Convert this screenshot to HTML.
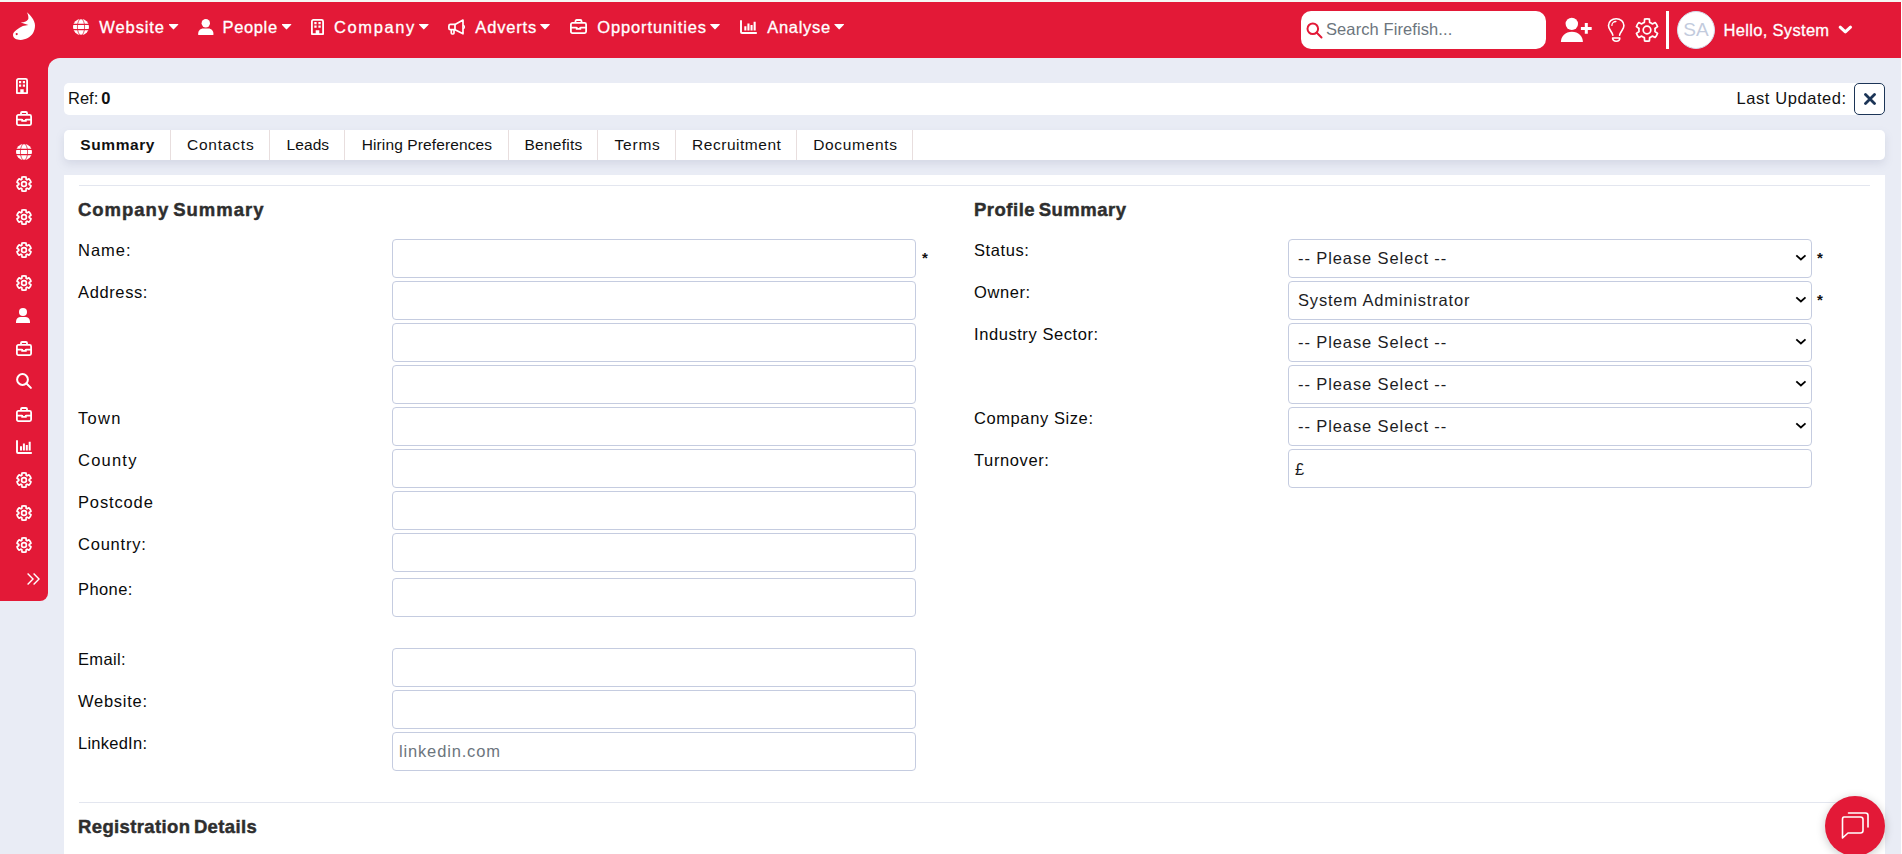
<!DOCTYPE html>
<html lang="en">
<head>
<meta charset="utf-8">
<title>Firefish - Company</title>
<style>
*{box-sizing:border-box}
html,body{margin:0;padding:0}
body{width:1902px;height:854px;overflow:hidden;background:#fff;font-family:"Liberation Sans",sans-serif;font-size:16.5px;color:#1d1d1f;position:relative}
#topstrip{position:absolute;left:0;top:0;width:1902px;height:2px;background:#f5f8f4}
#app{position:absolute;left:0;top:2px;width:1901px;height:852px;background:#e9ecf5;overflow:hidden}
header{position:absolute;left:0;top:0;width:1901px;height:56px;background:#e31937}
aside{position:absolute;left:0;top:56px;width:48px;height:543px;background:#e31937;border-bottom-right-radius:8px}
#corner{position:absolute;left:48px;top:56px;width:14px;height:14px;background:#e31937}
#corner:after{content:"";position:absolute;left:0;top:0;width:28px;height:28px;border-radius:12px;background:#e9ecf5}
header svg,aside svg{position:absolute;display:block;overflow:visible}
.nav{position:absolute;top:0;height:56px;color:#fff;font-size:16.5px;white-space:nowrap}
.nav span{position:absolute;top:15px;line-height:20px;font-weight:400;-webkit-text-stroke:.3px #fff}
.caret{position:absolute;top:21.5px;width:10px;height:6px;background:#fff;clip-path:path("M0.3 1.2C0 .6.4 0 1 0h8c.6 0 1 .6.700 1.200L5.600 5.600c-.3.400-.9.400-1.200 0z")}
#search{position:absolute;left:1301px;top:9px;width:245px;height:38px;background:#fff;border-radius:10px}
#search span{position:absolute;left:25px;top:8px;line-height:20px;color:#6c757d;white-space:nowrap}
#vdiv{position:absolute;left:1666px;top:9px;width:3px;height:38px;background:#fff}
#avatar{position:absolute;left:1677px;top:9px;width:38px;height:38px;border-radius:50%;background:#fff;border:1px solid #d5dbea;color:#c3cbdd;font-size:19px;line-height:35px;text-align:center;letter-spacing:.2px;padding-left:0}
#hello{position:absolute;left:1723.5px;top:17.5px;line-height:20px;color:#fff;white-space:nowrap;-webkit-text-stroke:.3px #fff}
/* content */
#refbar{position:absolute;left:64px;top:81px;width:1821px;height:32px;background:#fff;border-radius:5px}
#refbar .l{position:absolute;left:4px;top:5px;line-height:20px;white-space:nowrap;color:#111}
#refbar .r{position:absolute;left:1672.5px;top:5px;line-height:20px;white-space:nowrap;color:#111}
#closebtn{position:absolute;left:1854px;top:81px;width:31px;height:32px;border:1px solid #1c3557;border-radius:5px;background:#fff}
#tabs{position:absolute;left:64px;top:128px;width:1821px;height:30px;background:#fff;border-radius:5px;box-shadow:0 4px 8px rgba(120,130,160,.18)}
#tabs div{position:absolute;top:0;height:30px;border-right:1px solid #e8dede;font-size:15.5px;line-height:30px;white-space:nowrap;color:#111}
#tabs div span{position:absolute;top:0}
#card{position:absolute;left:64px;top:173px;width:1821px;height:700px;background:#fff}
.hr{position:absolute;left:15px;width:1791px;height:1px;background:#e3e6ef}
h2{position:absolute;margin:0;font-size:18.5px;line-height:22px;font-weight:700;color:#2e2e2e;white-space:nowrap;-webkit-text-stroke:.45px #2e2e2e;word-spacing:-2px}
label{position:absolute;line-height:20px;white-space:nowrap;color:#0a0a0a}
.inp{position:absolute;width:524px;height:39px;border:1px solid #c5cce0;border-radius:4px;background:#fff;margin:0;padding:0 6px;outline:none;font:inherit}
.inp span{position:absolute;left:6px;top:8px;line-height:20px;white-space:nowrap}
select{position:absolute;width:524px;height:39px;border:1px solid #c5cce0;border-radius:4px;background:#fff;font-family:"Liberation Sans",sans-serif;font-size:16.5px;color:#1d1d1f;padding:0 0 1px 9px;margin:0;outline:none;-webkit-appearance:none;appearance:none;letter-spacing:.9px}
.chev{position:absolute;display:block}
.req{position:absolute;font-size:15px;line-height:14px;color:#111;font-weight:700}
#chat{position:absolute;left:1825px;top:794px;width:60px;height:60px;border-radius:50%;background:#e31937;box-shadow:0 2px 10px rgba(0,0,0,.22)}




/*FIT*/#t_website{letter-spacing:0.90px}#t_people{letter-spacing:0.64px}#t_company{letter-spacing:1.61px}#t_adverts{letter-spacing:0.84px}#t_opps{letter-spacing:0.89px}#t_analyse{letter-spacing:0.68px}#t_search{letter-spacing:0.09px}#hello{letter-spacing:0.32px}#tab0{letter-spacing:0.59px}#tab1{letter-spacing:0.78px}#tab2{letter-spacing:0.09px}#tab3{letter-spacing:0.12px}#tab4{letter-spacing:0.25px}#tab5{letter-spacing:0.75px}#tab6{letter-spacing:0.52px}#tab7{letter-spacing:0.67px}#h_cs{letter-spacing:0.98px}#h_ps{letter-spacing:0.50px}#h_rd{letter-spacing:0.37px}#ll0{letter-spacing:1.00px}#ll1{letter-spacing:0.62px}#ll4{letter-spacing:1.32px}#ll5{letter-spacing:1.22px}#ll6{letter-spacing:0.86px}#ll7{letter-spacing:0.78px}#ll8{letter-spacing:0.40px}#ll9{letter-spacing:0.35px}#ll10{letter-spacing:0.73px}#ll11{letter-spacing:0.25px}#rl0{letter-spacing:0.59px}#rl1{letter-spacing:0.60px}#rl2{letter-spacing:0.57px}#rl4{letter-spacing:0.59px}#rl5{letter-spacing:0.62px}#ph_li{letter-spacing:0.84px}#t_last{letter-spacing:0.58px}/*ENDFIT*/
</style>
</head>
<body>
<div id="topstrip"></div>
<div id="app">
<header>
<!-- logo -->
<svg style="left:12px;top:10px" width="24" height="29" viewBox="0 0 24 29"><path fill="#fff" d="M14.800.3C17 1.800 18.600 3.600 19.700 5.200 21.800 8 23 10.800 23 13.600c0 2.900-.7 5.400-1.900 7.500C18.500 25.300 13.600 27.900 8.500 27.900 4.500 27.900 1.200 26.300 1 23c-.1-2 1.500-3.700 3.700-5.200 1.800-1.300 3.800-2.600 6.100-3.700 1.800-.7 3.700-1.100 5.600-1.200L8.700 10.600c1.800-.2 3.500-.6 4.900-1.200 1.900-.8 3-2 2.800-3.300-.1-1.300-.1-2.300-.45-3.300-.25-.8-.65-1.700-1.150-2.500z"/><circle cx="4.700" cy="22.100" r="1.100" fill="#e31937"/></svg>
<nav>
<div class="nav" style="left:73px"><svg style="left:0;top:17px" width="16" height="16" viewBox="0 0 16 16"><circle cx="8" cy="8" r="8" fill="#fff"/><g fill="none" stroke="#e31937"><ellipse cx="8" cy="8" rx="3.600" ry="8.300" stroke-width=".75"/><path stroke-width="1.200" d="M-.5 5.400h17M-.5 10.600h17"/></g></svg><span id="t_website" style="left:26.300px">Website</span><i class="caret" style="left:95.500px"></i></div>
<div class="nav" style="left:197.500px"><svg style="left:0;top:17px" width="16" height="16" viewBox="0 0 16 16"><circle cx="7.800" cy="4.200" r="4.200" fill="#fff"/><path fill="#fff" d="M.2 16v-1.400c0-3.100 2.200-5.200 5-5.200h5.200c2.800 0 5 2.100 5 5.200V16z"/></svg><span id="t_people" style="left:25px">People</span><i class="caret" style="left:84px"></i></div>
<div class="nav" style="left:311px"><svg style="left:0;top:17px" width="13" height="16" viewBox="0 0 13 16"><path fill="none" stroke="#fff" stroke-width="1.800" stroke-linejoin="round" d="M.9 2.400c0-.8.700-1.500 1.500-1.500h8.200c.8 0 1.500.7 1.500 1.500v12.700H.9z"/><path fill="#fff" d="M3.300 3h2.300v2.200H3.300zM7.400 3h2.300v2.200H7.400zM3.300 6.600h2.300v2.200H3.300zM7.400 6.600h2.300v2.200H7.400zM4.700 11.200h3.600V16H4.700z"/></svg><span id="t_company" style="left:23px">Company</span><i class="caret" style="left:107.800px"></i></div>
<div class="nav" style="left:448px"><svg style="left:0;top:17px" width="17" height="16" viewBox="0 0 17 16"><g fill="none" stroke="#fff" stroke-width="1.700" stroke-linejoin="round" stroke-linecap="round"><path d="M15 1.100v13.700L7 10.700H2.400c-.8 0-1.500-.7-1.500-1.500V6.900c0-.8.700-1.500 1.500-1.500H7z"/><path d="M7 5.600v4.900M3.300 10.900v3.200c0 .5.400.9.900.9h.9c.5 0 .9-.4.900-.9v-3.200"/><path d="M15.400 6.400c.7.200 1.100.9 1.100 1.600s-.4 1.400-1.100 1.600" stroke-width="1.200"/></g></svg><span id="t_adverts" style="left:27.300px">Adverts</span><i class="caret" style="left:92px"></i></div>
<div class="nav" style="left:570px"><svg style="left:0;top:17px" width="17" height="15" viewBox="0 0 17 15"><g fill="none" stroke="#fff" stroke-width="1.800"><rect x=".9" y="3.900" width="15.200" height="10.200" rx="1.500"/><path d="M5.500 3.800V2.100c0-.6.500-1.100 1.100-1.100h3.800c.6 0 1.100.5 1.100 1.100v1.700M.9 8.700h5.800M10.300 8.700h5.800"/><path d="M6.700 8v1.800h3.600V8"/></g></svg><span id="t_opps" style="left:27.200px">Opportunities</span><i class="caret" style="left:140px"></i></div>
<div class="nav" style="left:740px"><svg style="left:0;top:18px" width="17" height="14" viewBox="0 0 17 14"><path fill="none" stroke="#fff" stroke-width="1.900" stroke-linecap="round" stroke-linejoin="round" d="M1 .9v11.100c0 .6.400 1 1 1h14.100"/><path fill="#fff" d="M4.300 6.200h2.100v4.400H4.300zM7.400 3.400h2.100v7.200H7.400zM10.500 5h2.100v5.600h-2.100zM13.600 1.800h2.100v8.800h-2.100z"/></svg><span id="t_analyse" style="left:27.300px">Analyse</span><i class="caret" style="left:94.200px"></i></div>
</nav>
<div id="search"><svg style="left:5px;top:10.500px" width="17" height="17" viewBox="0 0 17 17"><g fill="none" stroke="#e31937" stroke-width="2"><circle cx="6.800" cy="6.800" r="5.300"/><path stroke-linecap="round" d="M10.800 10.800l4.700 4.700"/></g></svg><span id="t_search">Search Firefish...</span></div>
<!-- user plus -->
<svg style="left:1560px;top:15px" width="32" height="26" viewBox="0 0 32 26"><circle cx="11.800" cy="6.900" r="6.200" fill="#fff"/><path fill="#fff" d="M.9 25c0-6 4.500-10.300 11-10.300S22.900 19 22.900 25z"/><path stroke="#fff" stroke-width="3" d="M26.300 6v10.800M20.900 11.400h10.800"/></svg>
<!-- lightbulb -->
<svg style="left:1607px;top:15px" width="19" height="26" viewBox="0 0 19 26"><g fill="none" stroke="#fff" stroke-width="1.600" stroke-linecap="round" stroke-linejoin="round"><path d="M5.800 18.200c-.4-2-1.400-3.300-2.500-4.900C2.200 11.700 1.500 10.400 1.500 8.600 1.500 4.600 4.900 1.700 9.200 1.700s7.700 2.900 7.700 6.900c0 1.800-.7 3.100-1.800 4.700-1.100 1.600-2.100 2.900-2.500 4.900"/><path d="M5.600 21h7.200c0 2-1.500 3.300-3.600 3.300S5.600 23 5.600 21z"/><path d="M4.900 8.400c0-2.200 1.800-3.900 4-3.900" stroke-width="1.300"/></g></svg>
<!-- gear -->
<svg style="left:1635px;top:16px" width="24" height="24" viewBox="0 0 24 24"><g fill="none" stroke="#fff" stroke-width="1.700" stroke-linejoin="round"><circle cx="12" cy="12" r="3.800"/><path d="M14.64 4.34L14.40 1.16A11.10 11.10 0 0 0 9.60 1.16L9.36 4.34A8.10 8.10 0 0 0 6.69 5.89L3.82 4.50A11.10 11.10 0 0 0 1.41 8.66L4.05 10.45A8.10 8.10 0 0 0 4.05 13.55L1.41 15.34A11.10 11.10 0 0 0 3.82 19.50L6.69 18.11A8.10 8.10 0 0 0 9.36 19.66L9.60 22.84A11.10 11.10 0 0 0 14.40 22.84L14.64 19.66A8.10 8.10 0 0 0 17.31 18.11L20.18 19.50A11.10 11.10 0 0 0 22.59 15.34L19.95 13.55A8.10 8.10 0 0 0 19.95 10.45L22.59 8.66A11.10 11.10 0 0 0 20.18 4.50L17.31 5.89A8.10 8.10 0 0 0 14.64 4.34Z"/></g></svg>
<div id="vdiv"></div>
<div id="avatar">SA</div>
<span id="hello">Hello, System</span>
<svg style="left:1837.700px;top:23px" width="15" height="10" viewBox="0 0 15 10"><path fill="none" stroke="#fff" stroke-width="3.100" stroke-linecap="round" stroke-linejoin="round" d="M2.200 2.200l5.150 4.700 5.150-4.700"/></svg>
</header>
<aside>
<svg style="left:16px;top:20px" width="12" height="16" viewBox="0 0 12 16"><path fill="none" stroke="#fff" stroke-width="1.800" stroke-linejoin="round" d="M.9 2.400c0-.8.700-1.500 1.500-1.500h7.200c.8 0 1.500.7 1.500 1.500v12.700H.9z"/><path fill="#fff" d="M3 3h2.200v2.200H3zM6.800 3H9v2.200H6.800zM3 6.600h2.200v2.200H3zM6.800 6.600H9v2.200H6.800zM4.300 11.200h3.400V16H4.300z"/></svg>
<svg style="left:16px;top:53px" width="16" height="15" viewBox="0 0 16 15"><g fill="none" stroke="#fff" stroke-width="1.800"><rect x=".9" y="3.900" width="14.200" height="10.200" rx="1.500"/><path d="M5 3.800V2.100C5 1.500 5.500 1 6.100 1h3.800c.6 0 1.100.5 1.100 1.100v1.700M.9 8.700h5.300M9.800 8.700h5.300"/><path d="M6.200 8v1.800h3.600V8"/></g></svg>
<svg style="left:16px;top:86px" width="16" height="16" viewBox="0 0 16 16"><circle cx="8" cy="8" r="8" fill="#fff"/><g fill="none" stroke="#e31937"><ellipse cx="8" cy="8" rx="3.600" ry="8.300" stroke-width=".75"/><path stroke-width="1.200" d="M-.5 5.400h17M-.5 10.600h17"/></g></svg>
<svg style="left:16px;top:118px" width="16" height="16" viewBox="0 0 16 16"><g fill="none" stroke="#fff" stroke-width="1.700" stroke-linejoin="round"><circle cx="8" cy="8" r="2.400"/><path d="M10.12 3.25L10.04 1.10A7.20 7.20 0 0 0 5.96 1.10L5.88 3.25A5.20 5.20 0 0 0 4.94 3.79L3.04 2.78A7.20 7.20 0 0 0 1.00 6.32L2.83 7.46A5.20 5.20 0 0 0 2.83 8.54L1.00 9.68A7.20 7.20 0 0 0 3.04 13.22L4.94 12.21A5.20 5.20 0 0 0 5.88 12.75L5.96 14.90A7.20 7.20 0 0 0 10.04 14.90L10.12 12.75A5.20 5.20 0 0 0 11.06 12.21L12.96 13.22A7.20 7.20 0 0 0 15.00 9.68L13.17 8.54A5.20 5.20 0 0 0 13.17 7.46L15.00 6.32A7.20 7.20 0 0 0 12.96 2.78L11.06 3.79A5.20 5.20 0 0 0 10.12 3.25Z"/></g></svg>
<svg style="left:16px;top:151px" width="16" height="16" viewBox="0 0 16 16"><g fill="none" stroke="#fff" stroke-width="1.700" stroke-linejoin="round"><circle cx="8" cy="8" r="2.400"/><path d="M10.12 3.25L10.04 1.10A7.20 7.20 0 0 0 5.96 1.10L5.88 3.25A5.20 5.20 0 0 0 4.94 3.79L3.04 2.78A7.20 7.20 0 0 0 1.00 6.32L2.83 7.46A5.20 5.20 0 0 0 2.83 8.54L1.00 9.68A7.20 7.20 0 0 0 3.04 13.22L4.94 12.21A5.20 5.20 0 0 0 5.88 12.75L5.96 14.90A7.20 7.20 0 0 0 10.04 14.90L10.12 12.75A5.20 5.20 0 0 0 11.06 12.21L12.96 13.22A7.20 7.20 0 0 0 15.00 9.68L13.17 8.54A5.20 5.20 0 0 0 13.17 7.46L15.00 6.32A7.20 7.20 0 0 0 12.96 2.78L11.06 3.79A5.20 5.20 0 0 0 10.12 3.25Z"/></g></svg>
<svg style="left:16px;top:184px" width="16" height="16" viewBox="0 0 16 16"><g fill="none" stroke="#fff" stroke-width="1.700" stroke-linejoin="round"><circle cx="8" cy="8" r="2.400"/><path d="M10.12 3.25L10.04 1.10A7.20 7.20 0 0 0 5.96 1.10L5.88 3.25A5.20 5.20 0 0 0 4.94 3.79L3.04 2.78A7.20 7.20 0 0 0 1.00 6.32L2.83 7.46A5.20 5.20 0 0 0 2.83 8.54L1.00 9.68A7.20 7.20 0 0 0 3.04 13.22L4.94 12.21A5.20 5.20 0 0 0 5.88 12.75L5.96 14.90A7.20 7.20 0 0 0 10.04 14.90L10.12 12.75A5.20 5.20 0 0 0 11.06 12.21L12.96 13.22A7.20 7.20 0 0 0 15.00 9.68L13.17 8.54A5.20 5.20 0 0 0 13.17 7.46L15.00 6.32A7.20 7.20 0 0 0 12.96 2.78L11.06 3.79A5.20 5.20 0 0 0 10.12 3.25Z"/></g></svg>
<svg style="left:16px;top:217px" width="16" height="16" viewBox="0 0 16 16"><g fill="none" stroke="#fff" stroke-width="1.700" stroke-linejoin="round"><circle cx="8" cy="8" r="2.400"/><path d="M10.12 3.25L10.04 1.10A7.20 7.20 0 0 0 5.96 1.10L5.88 3.25A5.20 5.20 0 0 0 4.94 3.79L3.04 2.78A7.20 7.20 0 0 0 1.00 6.32L2.83 7.46A5.20 5.20 0 0 0 2.83 8.54L1.00 9.68A7.20 7.20 0 0 0 3.04 13.22L4.94 12.21A5.20 5.20 0 0 0 5.88 12.75L5.96 14.90A7.20 7.20 0 0 0 10.04 14.90L10.12 12.75A5.20 5.20 0 0 0 11.06 12.21L12.96 13.22A7.20 7.20 0 0 0 15.00 9.68L13.17 8.54A5.20 5.20 0 0 0 13.17 7.46L15.00 6.32A7.20 7.20 0 0 0 12.96 2.78L11.06 3.79A5.20 5.20 0 0 0 10.12 3.25Z"/></g></svg>
<svg style="left:16px;top:250px" width="14" height="15" viewBox="0 0 14 15"><circle cx="7" cy="4" r="4" fill="#fff"/><path fill="#fff" d="M0 15v-1.200c0-2.900 2-4.800 4.600-4.800h4.800c2.600 0 4.600 1.900 4.600 4.800V15z"/></svg>
<svg style="left:16px;top:282.5px" width="16" height="15" viewBox="0 0 16 15"><g fill="none" stroke="#fff" stroke-width="1.800"><rect x=".9" y="3.900" width="14.200" height="10.200" rx="1.500"/><path d="M5 3.800V2.100C5 1.500 5.500 1 6.100 1h3.800c.6 0 1.100.5 1.100 1.100v1.700M.9 8.700h5.300M9.800 8.700h5.300"/><path d="M6.200 8v1.800h3.600V8"/></g></svg>
<svg style="left:16px;top:315px" width="16" height="16" viewBox="0 0 16 16"><g fill="none" stroke="#fff" stroke-width="2"><circle cx="6.500" cy="6.500" r="5.400"/><path stroke-linecap="round" d="M10.500 10.500l4.400 4.400"/></g></svg>
<svg style="left:16px;top:348.5px" width="16" height="15" viewBox="0 0 16 15"><g fill="none" stroke="#fff" stroke-width="1.800"><rect x=".9" y="3.900" width="14.200" height="10.200" rx="1.500"/><path d="M5 3.800V2.100C5 1.500 5.500 1 6.100 1h3.800c.6 0 1.100.5 1.100 1.100v1.700M.9 8.700h5.300M9.800 8.700h5.300"/><path d="M6.200 8v1.800h3.600V8"/></g></svg>
<svg style="left:16px;top:382px" width="16" height="14" viewBox="0 0 16 14"><path fill="none" stroke="#fff" stroke-width="1.900" stroke-linecap="round" stroke-linejoin="round" d="M1 .9v11.100c0 .6.400 1 1 1h13.100"/><path fill="#fff" d="M4 6.200h2v4.400H4zM6.900 3.400h2v7.200h-2zM9.800 5h2v5.600h-2zM12.700 1.800h2v8.800h-2z"/></svg>
<svg style="left:16px;top:414px" width="16" height="16" viewBox="0 0 16 16"><g fill="none" stroke="#fff" stroke-width="1.700" stroke-linejoin="round"><circle cx="8" cy="8" r="2.400"/><path d="M10.12 3.25L10.04 1.10A7.20 7.20 0 0 0 5.96 1.10L5.88 3.25A5.20 5.20 0 0 0 4.94 3.79L3.04 2.78A7.20 7.20 0 0 0 1.00 6.32L2.83 7.46A5.20 5.20 0 0 0 2.83 8.54L1.00 9.68A7.20 7.20 0 0 0 3.04 13.22L4.94 12.21A5.20 5.20 0 0 0 5.88 12.75L5.96 14.90A7.20 7.20 0 0 0 10.04 14.90L10.12 12.75A5.20 5.20 0 0 0 11.06 12.21L12.96 13.22A7.20 7.20 0 0 0 15.00 9.68L13.17 8.54A5.20 5.20 0 0 0 13.17 7.46L15.00 6.32A7.20 7.20 0 0 0 12.96 2.78L11.06 3.79A5.20 5.20 0 0 0 10.12 3.25Z"/></g></svg>
<svg style="left:16px;top:446.5px" width="16" height="16" viewBox="0 0 16 16"><g fill="none" stroke="#fff" stroke-width="1.700" stroke-linejoin="round"><circle cx="8" cy="8" r="2.400"/><path d="M10.12 3.25L10.04 1.10A7.20 7.20 0 0 0 5.96 1.10L5.88 3.25A5.20 5.20 0 0 0 4.94 3.79L3.04 2.78A7.20 7.20 0 0 0 1.00 6.32L2.83 7.46A5.20 5.20 0 0 0 2.83 8.54L1.00 9.68A7.20 7.20 0 0 0 3.04 13.22L4.94 12.21A5.20 5.20 0 0 0 5.88 12.75L5.96 14.90A7.20 7.20 0 0 0 10.04 14.90L10.12 12.75A5.20 5.20 0 0 0 11.06 12.21L12.96 13.22A7.20 7.20 0 0 0 15.00 9.68L13.17 8.54A5.20 5.20 0 0 0 13.17 7.46L15.00 6.32A7.20 7.20 0 0 0 12.96 2.78L11.06 3.79A5.20 5.20 0 0 0 10.12 3.25Z"/></g></svg>
<svg style="left:16px;top:479px" width="16" height="16" viewBox="0 0 16 16"><g fill="none" stroke="#fff" stroke-width="1.700" stroke-linejoin="round"><circle cx="8" cy="8" r="2.400"/><path d="M10.12 3.25L10.04 1.10A7.20 7.20 0 0 0 5.96 1.10L5.88 3.25A5.20 5.20 0 0 0 4.94 3.79L3.04 2.78A7.20 7.20 0 0 0 1.00 6.32L2.83 7.46A5.20 5.20 0 0 0 2.83 8.54L1.00 9.68A7.20 7.20 0 0 0 3.04 13.22L4.94 12.21A5.20 5.20 0 0 0 5.88 12.75L5.96 14.90A7.20 7.20 0 0 0 10.04 14.90L10.12 12.75A5.20 5.20 0 0 0 11.06 12.21L12.96 13.22A7.20 7.20 0 0 0 15.00 9.68L13.17 8.54A5.20 5.20 0 0 0 13.17 7.46L15.00 6.32A7.20 7.20 0 0 0 12.96 2.78L11.06 3.79A5.20 5.20 0 0 0 10.12 3.25Z"/></g></svg>
<svg style="left:27px;top:515px" width="13" height="12" viewBox="0 0 13 12"><path fill="none" stroke="#fff" stroke-width="1.400" d="M.6.600l5.400 5.400L.6 11.400M6.600.600l5.400 5.400-5.400 5.400"/></svg>
</aside>
<div id="corner"></div>
<main>
<div id="refbar"><span class="l" style="word-spacing:-1.500px">Ref: <b>0</b></span><span class="r" id="t_last">Last Updated:</span></div>
<div id="closebtn"><svg style="position:absolute;left:8.500px;top:9px" width="12" height="12" viewBox="0 0 12 12"><path stroke="#1c3557" stroke-width="2.800" stroke-linecap="round" d="M1.500 1.500l9 9M10.500 1.500l-9 9"/></svg></div>
<nav id="tabs">
<div style="left:0px;width:107px"><span id="tab0" style="left:16.3px;font-weight:700">Summary</span></div>
<div style="left:106px;width:100px"><span id="tab1" style="left:17px">Contacts</span></div>
<div style="left:205px;width:76px"><span id="tab2" style="left:17.5px">Leads</span></div>
<div style="left:280px;width:165px"><span id="tab3" style="left:17.7px">Hiring Preferences</span></div>
<div style="left:444px;width:90px"><span id="tab4" style="left:16.5px">Benefits</span></div>
<div style="left:533px;width:79px"><span id="tab5" style="left:17.6px">Terms</span></div>
<div style="left:611px;width:122px"><span id="tab6" style="left:17.1px">Recruitment</span></div>
<div style="left:732px;width:117px"><span id="tab7" style="left:17.2px">Documents</span></div>
</nav>
<section id="card">
<div class="hr" style="top:10px"></div>
<h2 id="h_cs" style="left:14px;top:24px">Company Summary</h2>
<h2 id="h_ps" style="left:910px;top:24px">Profile Summary</h2>
<label id="ll0" style="left:14px;top:65px">Name:</label>
<input class="inp" type="text" style="left:328px;top:64px">
<label id="ll1" style="left:14px;top:107px">Address:</label>
<input class="inp" type="text" style="left:328px;top:106px">
<input class="inp" type="text" style="left:328px;top:148px">
<input class="inp" type="text" style="left:328px;top:190px">
<label id="ll4" style="left:14px;top:233px">Town</label>
<input class="inp" type="text" style="left:328px;top:232px">
<label id="ll5" style="left:14px;top:275px">County</label>
<input class="inp" type="text" style="left:328px;top:274px">
<label id="ll6" style="left:14px;top:317px">Postcode</label>
<input class="inp" type="text" style="left:328px;top:316px">
<label id="ll7" style="left:14px;top:359px">Country:</label>
<input class="inp" type="text" style="left:328px;top:358px">
<label id="ll8" style="left:14px;top:404px">Phone:</label>
<input class="inp" type="text" style="left:328px;top:403px">
<label id="ll9" style="left:14px;top:474px">Email:</label>
<input class="inp" type="text" style="left:328px;top:473px">
<label id="ll10" style="left:14px;top:516px">Website:</label>
<input class="inp" type="text" style="left:328px;top:515px">
<label id="ll11" style="left:14px;top:558px">LinkedIn:</label>
<div class="inp" style="left:328px;top:557px"><span id="ph_li" style="color:#6c757d">linkedin.com</span></div>
<span class="req" style="left:858px;top:75.5px">*</span>
<label id="rl0" style="left:910px;top:65px">Status:</label>
<select id="sel0" style="left:1224px;top:64px"><option>-- Please Select --</option></select><svg class="chev" style="left:1731px;top:78.75px" width="12" height="8" viewBox="0 0 12 8"><path fill="none" stroke="#000" stroke-width="1.800" d="M1.300 1.300l4.600 4.200 4.600-4.200"/></svg>
<label id="rl1" style="left:910px;top:107px">Owner:</label>
<select id="sel1" style="letter-spacing:.82px;left:1224px;top:106px"><option>System Administrator</option></select><svg class="chev" style="left:1731px;top:120.75px" width="12" height="8" viewBox="0 0 12 8"><path fill="none" stroke="#000" stroke-width="1.800" d="M1.300 1.300l4.600 4.200 4.600-4.200"/></svg>
<label id="rl2" style="left:910px;top:149px">Industry Sector:</label>
<select id="sel2" style="left:1224px;top:148px"><option>-- Please Select --</option></select><svg class="chev" style="left:1731px;top:162.75px" width="12" height="8" viewBox="0 0 12 8"><path fill="none" stroke="#000" stroke-width="1.800" d="M1.300 1.300l4.600 4.200 4.600-4.200"/></svg>
<select id="sel3" style="left:1224px;top:190px"><option>-- Please Select --</option></select><svg class="chev" style="left:1731px;top:204.75px" width="12" height="8" viewBox="0 0 12 8"><path fill="none" stroke="#000" stroke-width="1.800" d="M1.300 1.300l4.600 4.200 4.600-4.200"/></svg>
<label id="rl4" style="left:910px;top:233px">Company Size:</label>
<select id="sel4" style="left:1224px;top:232px"><option>-- Please Select --</option></select><svg class="chev" style="left:1731px;top:246.75px" width="12" height="8" viewBox="0 0 12 8"><path fill="none" stroke="#000" stroke-width="1.800" d="M1.300 1.300l4.600 4.200 4.600-4.200"/></svg>
<label id="rl5" style="left:910px;top:275px">Turnover:</label>
<div class="inp" style="left:1224px;top:274px"><span style="top:9px">£</span></div>
<span class="req" style="left:1753px;top:75.5px">*</span>
<span class="req" style="left:1753px;top:117.5px">*</span>
<div class="hr" style="top:627px"></div>
<h2 id="h_rd" style="left:14px;top:641px">Registration Details</h2>
</section>
</main>
<div id="chat"><svg style="position:absolute;left:16px;top:16px" width="28" height="28" viewBox="0 0 28 28"><g fill="none" stroke="#fff" stroke-width="1.600" stroke-linejoin="round" stroke-linecap="round"><path d="M7.500 1h17c1.400 0 2.500 1.100 2.500 2.500V15"/><path d="M3 5h16.500c1.400 0 2.500 1.100 2.500 2.500v11c0 1.400-1.100 2.500-2.500 2.500H7l-5.500 5V7.500C1.500 6.100 2.100 5 3 5z"/></g></svg></div>
</div>
</body>
</html>
